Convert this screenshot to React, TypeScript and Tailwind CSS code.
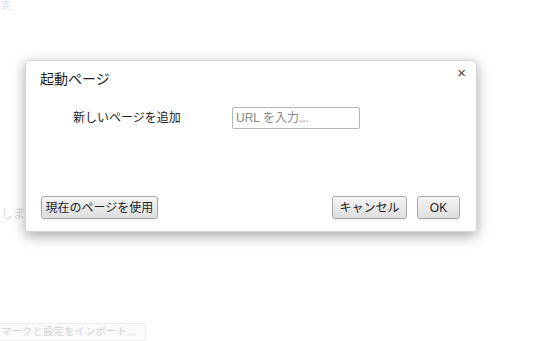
import React from "react";

const font = { fontFamily: '"Liberation Sans", "Noto Sans CJK JP", sans-serif' };

function Btn({ children, className = "" }: { children: React.ReactNode; className?: string }) {
  return (
    <button
      className={
        "h-[23px] whitespace-nowrap rounded-[3px] border border-[#a8a8a8] bg-gradient-to-b from-[#f4f4f4] to-[#dedede] text-[12px] text-[#222] shadow-[0_1px_0_rgba(0,0,0,0.08)] " +
        className
      }
    >
      {children}
    </button>
  );
}

export default function App() {
  return (
    <div className="relative h-[341px] w-[550px] overflow-hidden bg-white" style={font}>
      {/* faded background page */}
      <div className="flex h-full flex-col">
        <div className="h-[14px] pl-[1px] text-[10px] leading-[12px] text-[#c5cbf0]">定</div>
        <div className="mt-[194px] pl-[1px] text-[12px] leading-[16px] text-[#c8c8c8]">します</div>
        <div className="mt-[101px] ml-[-4px] flex h-[22px] w-[150px] items-center whitespace-nowrap rounded-[2px] border border-[#e6e6e6] bg-[#fafafa] pl-[4px] text-[10.5px] text-[#c0c0c0]">
          マークと設定をインポート...
        </div>
      </div>
      <div className="absolute inset-0 bg-white/30" />

      {/* dialog */}
      <div className="absolute left-[25px] top-[60px] h-[172px] w-[452px] rounded-[3px] border border-[#d4d4d4] bg-white shadow-[0_4px_14px_rgba(0,0,0,0.35)]">
        <div className="flex h-full flex-col px-[14px] pt-[8px] pb-[12px]">
          <div className="flex items-start justify-between">
            <div className="text-[14px] leading-[20px] text-[#222]">起動ページ</div>
            <div className="mr-[-4px] mt-[-4px] text-[15px] leading-[16px] text-[#444]">×</div>
          </div>
          <div className="mt-[18px] flex items-center">
            <div className="ml-[33px] w-[159px] text-[12px] text-[#222]">新しいページを追加</div>
            <div className="flex h-[22px] w-[128px] items-center rounded-[2px] border border-[#b5b5b5] bg-white pl-[3px] text-[12px] text-[#888]">
              URL を入力...
            </div>
          </div>
          <div className="mt-auto flex items-center">
            <Btn className="ml-[1px] w-[117px]">現在のページを使用</Btn>
            <div className="flex-1" />
            <Btn className="w-[75px]">キャンセル</Btn>
            <Btn className="ml-[10px] mr-[2px] w-[43px]">OK</Btn>
          </div>
        </div>
      </div>
    </div>
  );
}
